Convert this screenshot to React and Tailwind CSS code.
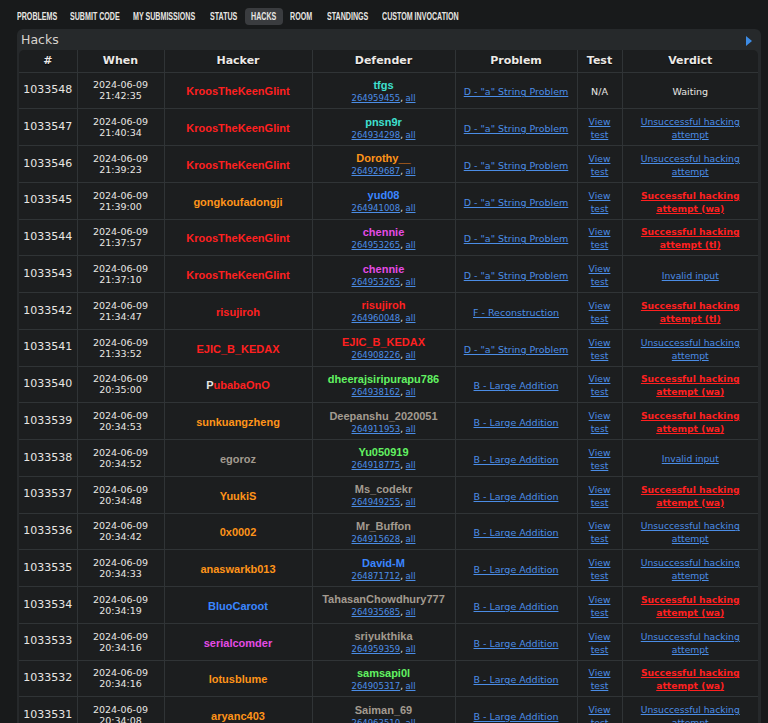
import React from "react";

const C = {
  red: "text-[#ff2020]",
  orange: "text-[#ff9419]",
  cyan: "text-[#3fe0d0]",
  blue: "text-[#3a86ff]",
  violet: "text-[#e54be5]",
  green: "text-[#62f262]",
  gray: "text-[#a39b90]",
};

const D = 'D - "a" String Problem';
const B = "B - Large Addition";
const F = "F - Reconstruction";

const rows = [
  ["1033548", "21:42:35", ["KroosTheKeenGlint", "red"], ["tfgs", "cyan"], "264959455", D, false, "wait"],
  ["1033547", "21:40:34", ["KroosTheKeenGlint", "red"], ["pnsn9r", "cyan"], "264934298", D, true, "uns"],
  ["1033546", "21:39:23", ["KroosTheKeenGlint", "red"], ["Dorothy__", "orange"], "264929687", D, true, "uns"],
  ["1033545", "21:39:00", ["gongkoufadongji", "orange"], ["yud08", "blue"], "264941008", D, true, "wa"],
  ["1033544", "21:37:57", ["KroosTheKeenGlint", "red"], ["chennie", "violet"], "264953265", D, true, "tl"],
  ["1033543", "21:37:10", ["KroosTheKeenGlint", "red"], ["chennie", "violet"], "264953265", D, true, "inv"],
  ["1033542", "21:34:47", ["risujiroh", "red"], ["risujiroh", "red"], "264960048", F, true, "tl"],
  ["1033541", "21:33:52", ["EJIC_B_KEDAX", "red"], ["EJIC_B_KEDAX", "red"], "264908226", D, true, "uns"],
  ["1033540", "20:35:00", ["PubabaOnO", "legend"], ["dheerajsiripurapu786", "green"], "264938162", B, true, "wa"],
  ["1033539", "20:34:53", ["sunkuangzheng", "orange"], ["Deepanshu_2020051", "gray"], "264911953", B, true, "wa"],
  ["1033538", "20:34:52", ["egoroz", "gray"], ["Yu050919", "green"], "264918775", B, true, "inv"],
  ["1033537", "20:34:48", ["YuukiS", "orange"], ["Ms_codekr", "gray"], "264949255", B, true, "wa"],
  ["1033536", "20:34:42", ["0x0002", "orange"], ["Mr_Buffon", "gray"], "264915628", B, true, "uns"],
  ["1033535", "20:34:33", ["anaswarkb013", "orange"], ["David-M", "blue"], "264871712", B, true, "uns"],
  ["1033534", "20:34:19", ["BluoCaroot", "blue"], ["TahasanChowdhury777", "gray"], "264935685", B, true, "wa"],
  ["1033533", "20:34:16", ["serialcomder", "violet"], ["sriyukthika", "gray"], "264959359", B, true, "uns"],
  ["1033532", "20:34:16", ["lotusblume", "orange"], ["samsapi0l", "green"], "264905317", B, true, "wa"],
  ["1033531", "20:34:08", ["aryanc403", "orange"], ["Saiman_69", "gray"], "264963510", B, true, "uns"],
];

const nav = [
  ["PROBLEMS", "w-[40px]"],
  ["SUBMIT CODE", "w-[50px]"],
  ["MY SUBMISSIONS", "w-[64px]"],
  ["STATUS", "w-[28px]"],
  ["HACKS", "w-[26px]"],
  ["ROOM", "w-[24px]"],
  ["STANDINGS", "w-[42px]"],
  ["CUSTOM INVOCATION", "w-[79px]"],
];

const nameFont = { fontFamily: '"Liberation Sans", Arial, sans-serif' };
const vFont = { fontFamily: '"DejaVu Sans", Verdana, sans-serif' };

function Name({ n }) {
  const [text, color] = n;
  if (color === "legend") {
    return (
      <span className="font-bold text-[11px]" style={nameFont}>
        <span className="text-[#e8e6e3]">{text[0]}</span>
        <span className={C.red}>{text.slice(1)}</span>
      </span>
    );
  }
  return (
    <span className={`font-bold text-[11px] ${C[color]}`} style={nameFont}>
      {text}
    </span>
  );
}

function Verdict({ v }) {
  const link = "text-[#4b8de6] underline text-[9.2px] leading-[11px]";
  const succ = "text-[#ff2020] underline font-bold text-[9.2px] leading-[11px]";
  if (v === "wait") return <span className="text-[#e8e6e3] text-[9.5px]">Waiting</span>;
  if (v === "uns")
    return (
      <span className={link}>
        Unsuccessful hacking
        <br />
        attempt
      </span>
    );
  if (v === "inv") return <span className={link}>Invalid input</span>;
  return (
    <span className={succ}>
      Successful hacking
      <br />
      attempt ({v})
    </span>
  );
}

export default function App() {
  return (
    <div className="min-h-[723px] bg-[#181a1b] text-[#e8e6e3] overflow-hidden" style={vFont}>
      <div className="flex pl-[11px] pt-[8px] h-[29px] items-start">
        {nav.map(([t, w]) => (
          <div
            key={t}
            className={`h-[17px] px-[6px] mr-[1px] flex items-center rounded-[4px] ${t === "HACKS" ? "bg-[#3a3c3f]" : ""}`}
          >
            <span className={`inline-block ${w} h-[12px] relative`}>
              <span
                className="absolute left-0 top-0 whitespace-nowrap origin-left scale-x-[0.71] font-bold text-[10px] leading-[12px] text-[#e8e6e3]"
                style={nameFont}
              >
                {t}
              </span>
            </span>
          </div>
        ))}
      </div>
      <div className="ml-[17px] w-[744px] bg-[#26292b] rounded-t-[6px] pl-[2px] pr-[3px]">
        <div className="h-[21px] pt-[2px] flex items-center justify-between pl-[2px] pr-[6px]">
          <span className="text-[12.5px] text-[#d8d4cf] leading-none">Hacks</span>
          <svg width="6" height="10" viewBox="0 0 6 10">
            <path d="M0 0 L6 5 L0 10 Z" fill="#3d8ce6" />
          </svg>
        </div>
        <table className="table-fixed border-collapse w-[739px] bg-[#1c1e1f] rounded-t-[5px]">
          <colgroup>
            <col className="w-[58px]" />
            <col className="w-[87px]" />
            <col className="w-[148px]" />
            <col className="w-[143px]" />
            <col className="w-[122px]" />
            <col className="w-[45px]" />
            <col className="w-[136px]" />
          </colgroup>
          <thead>
            <tr className="h-[22px]">
              {["#", "When", "Hacker", "Defender", "Problem", "Test", "Verdict"].map((h, i) => (
                <th
                  key={h}
                  className={`font-bold text-[11px] text-[#ece9e6] border-[#303436] border-b ${i > 0 ? "border-l" : ""} p-0 pt-[1px]`}
                  style={{ textShadow: "0 1px 1px #000" }}
                >
                  {h}
                </th>
              ))}
            </tr>
          </thead>
          <tbody>
            {rows.map((r) => (
              <tr key={r[0]} className="h-[36.75px]">
                <td className="text-center text-[11px] border-[#303436] border-b p-0">{r[0]}</td>
                <td className="text-center text-[9.5px] leading-[11px] border-[#303436] border-b border-l p-0">
                  2024-06-09
                  <br />
                  {r[1]}
                </td>
                <td className="text-center border-[#303436] border-b border-l p-0">
                  <Name n={r[2]} />
                </td>
                <td className="text-center border-[#303436] border-b border-l p-0">
                  <div className="leading-[13px]">
                    <Name n={r[3]} />
                  </div>
                  <div className="text-[8.5px] leading-[12px]">
                    <span className="text-[#4b8de6] underline">{r[4]}</span>
                    <span>, </span>
                    <span className="text-[#4b8de6] underline">all</span>
                  </div>
                </td>
                <td className="text-center border-[#303436] border-b border-l p-0">
                  <span className="text-[#4b8de6] underline text-[9.5px] whitespace-nowrap">{r[5]}</span>
                </td>
                <td className="text-center border-[#303436] border-b border-l p-0 leading-[11px]">
                  {r[6] ? (
                    <span className="text-[#4b8de6] underline text-[9.2px]">
                      View
                      <br />
                      test
                    </span>
                  ) : (
                    <span className="text-[9.5px]">N/A</span>
                  )}
                </td>
                <td className="text-center border-[#303436] border-b border-l p-0 leading-[11px]">
                  <Verdict v={r[7]} />
                </td>
              </tr>
            ))}
          </tbody>
        </table>
      </div>
    </div>
  );
}
